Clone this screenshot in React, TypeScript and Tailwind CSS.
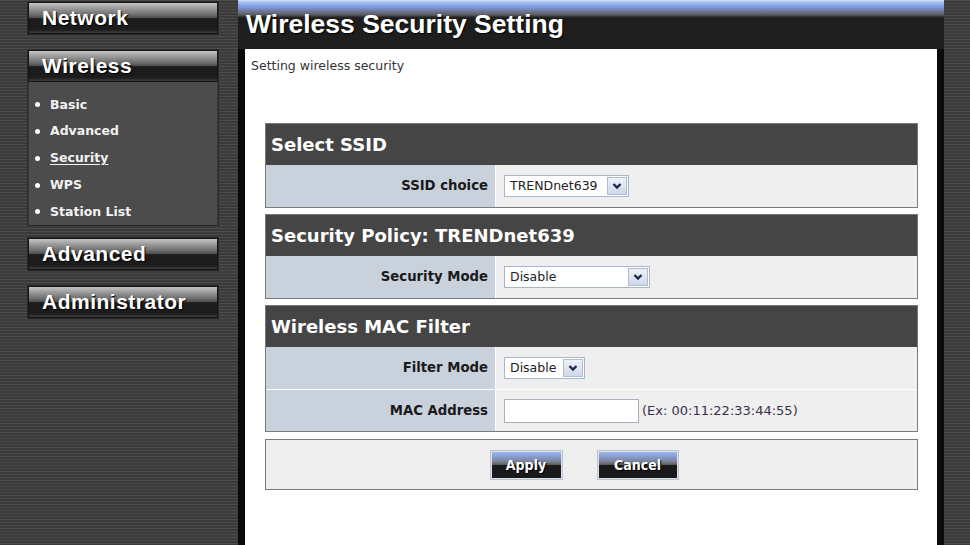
import React from "react";

const STRIPES =
  "bg-[repeating-linear-gradient(to_bottom,#4b4b4b_0px,#4b4b4b_1px,#3b3b3b_1px,#3b3b3b_3px)]";

function SideButton({ label }: { label: string }) {
  return (
    <div className="h-[32px] w-full border border-[#151515] bg-[linear-gradient(to_bottom,#c4c4c4_0%,#9a9a9a_18%,#6a6a6a_40%,#4a4a4a_50%,#1c1c1c_52%,#1c1c1c_88%,#3c3c3c_100%)] flex items-center pl-[13px]">
      <span className="font-['Liberation_Sans',Arial,sans-serif] font-bold text-[21px] tracking-[0.5px] leading-none text-white [text-shadow:1px_1px_1px_#000] -mt-[1px]">
        {label}
      </span>
    </div>
  );
}

function SubItem({ label, active }: { label: string; active?: boolean }) {
  return (
    <div className="h-[26.75px] flex items-center">
      <span className="w-[5px] h-[5px] rounded-full bg-white ml-[6px] mr-[10px]" />
      <span
        className={
          "font-['DejaVu_Sans',sans-serif] font-bold text-[12.5px] text-[#f2f2f2] leading-none" +
          (active ? " underline underline-offset-[2px]" : "")
        }
      >
        {label}
      </span>
    </div>
  );
}

function Chevron() {
  return (
    <svg width="12" height="10" viewBox="0 0 12 10">
      <path d="M2.5 3 L6 6.5 L9.5 3" fill="none" stroke="#1d2a4c" strokeWidth="2.4" />
    </svg>
  );
}

function FakeSelect({ value, cls }: { value: string; cls: string }) {
  return (
    <div className={"flex h-[22px] items-center border border-[#a7b6ca] bg-white " + cls}>
      <span className="pl-[5px] font-['DejaVu_Sans',sans-serif] text-[12.5px] text-[#222] leading-none">
        {value}
      </span>
      <div className="ml-auto mr-[1px] h-[18px] w-[20px] border border-[#aebbd1] bg-[linear-gradient(to_bottom,#eef1f7,#cfd8e8)] flex items-center justify-center">
        <Chevron />
      </div>
    </div>
  );
}

function Header({ title }: { title: string }) {
  return (
    <div className="h-[41px] bg-[#454545] flex items-center pl-[5px]">
      <span className="font-['DejaVu_Sans',sans-serif] font-bold text-[18px] text-white leading-none">
        {title}
      </span>
    </div>
  );
}

function Row({
  label,
  children,
  sep,
}: {
  label: string;
  children: React.ReactNode;
  sep?: boolean;
}) {
  return (
    <div className={"h-[42px] flex" + (sep ? " border-t border-white" : "")}>
      <div className="w-[229px] bg-[#c9d1dc] flex items-center justify-end pr-[7px]">
        <span className="font-['DejaVu_Sans',sans-serif] font-bold text-[13.25px] text-[#1a1a1a] leading-none">
          {label}
        </span>
      </div>
      <div className="flex-1 bg-[#efefef] flex items-center pl-[8px] border-l border-white">
        {children}
      </div>
    </div>
  );
}

function Btn({ label, cls }: { label: string; cls: string }) {
  return (
    <div className={"h-[30px] border border-[#b9c3d3] p-[1px] bg-[#dde2ea] " + cls}>
      <div className="h-full w-full bg-[linear-gradient(to_bottom,#9ab8f2_0%,#8aa2d6_15%,#7a7f8c_38%,#5e5e5e_48%,#1a1a1a_52%,#1a1a1a_100%)] flex items-center justify-center">
        <span className="font-['DejaVu_Sans_Condensed','DejaVu_Sans',sans-serif] [font-stretch:condensed] font-bold text-[14px] text-white leading-none [text-shadow:1px_1px_0_#000]">
          {label}
        </span>
      </div>
    </div>
  );
}

export default function App() {
  return (
    <div className="w-[970px] h-[545px] overflow-hidden flex">
      {/* Sidebar */}
      <div className={"w-[238px] h-full pl-[27px] " + STRIPES}>
        <div className="w-[192px] p-[1px] bg-[#2a2a2a] mt-[1px]">
          <SideButton label="Network" />
        </div>
        <div className="w-[192px] p-[1px] bg-[#2a2a2a] mt-[14px]">
          <SideButton label="Wireless" />
          <div className="bg-[#4c4c4c] border-x border-[#3a3a3a] pt-[9.5px]">
            <SubItem label="Basic" />
            <SubItem label="Advanced" />
            <SubItem label="Security" active />
            <SubItem label="WPS" />
            <SubItem label="Station List" />
          </div>
        </div>
        <div className="w-[192px] p-[1px] bg-[#2a2a2a] mt-[11px]">
          <SideButton label="Advanced" />
        </div>
        <div className="w-[192px] p-[1px] bg-[#2a2a2a] mt-[14px]">
          <SideButton label="Administrator" />
        </div>
      </div>

      {/* Main */}
      <div className="w-[706px] h-full bg-[#0b0b0b] flex flex-col">
        <div className="h-[49px] bg-[linear-gradient(to_bottom,#d6e6f6_0px,#a9c4f2_2px,#86a6ec_5px,#7b93cf_8px,#6c7286_12px,#5a5a5a_15px,#2a2a2a_17px,#1e1e1e_18px,#1e1e1e_100%)] pl-[8px] pt-[11px]">
          <span className="font-['Liberation_Sans',Arial,sans-serif] font-bold text-[26.5px] text-white leading-none [text-shadow:1px_1px_1px_#000]">
            Wireless Security Setting
          </span>
        </div>
        <div className="flex-1 mx-[7px] bg-white">
          <div className="h-[74px] pt-[9px] pl-[6px]">
            <span className="block font-['DejaVu_Sans',sans-serif] text-[12.5px] text-[#333] leading-[15px]">
              Setting wireless security
            </span>
          </div>
          <div className="ml-[20px] w-[653px] flex flex-col gap-[6px]">
            <div className="border border-[#7a7a7a]">
              <Header title="Select SSID" />
              <Row label="SSID choice">
                <FakeSelect value="TRENDnet639" cls="w-[125px]" />
              </Row>
            </div>
            <div className="border border-[#7a7a7a]">
              <Header title="Security Policy: TRENDnet639" />
              <Row label="Security Mode">
                <FakeSelect value="Disable" cls="w-[146px]" />
              </Row>
            </div>
            <div className="border border-[#7a7a7a]">
              <Header title="Wireless MAC Filter" />
              <Row label="Filter Mode">
                <FakeSelect value="Disable" cls="w-[81px]" />
              </Row>
              <Row label="MAC Address" sep>
                <div className="w-[135px] h-[24px] border border-[#a9b1bc] bg-white" />
                <span className="ml-[3px] font-['DejaVu_Sans',sans-serif] text-[13px] text-[#3a2f4a] leading-none">
                  (Ex: 00:11:22:33:44:55)
                </span>
              </Row>
            </div>
            <div className="h-[51px] mt-[1px] border border-[#7a7a7a] bg-[#efefef] flex items-center justify-center gap-[34px] pr-[15px]">
              <Btn label="Apply" cls="w-[73px]" />
              <Btn label="Cancel" cls="w-[82px]" />
            </div>
          </div>
        </div>
      </div>

      {/* Right strip */}
      <div className={"w-[26px] h-full " + STRIPES} />
    </div>
  );
}
